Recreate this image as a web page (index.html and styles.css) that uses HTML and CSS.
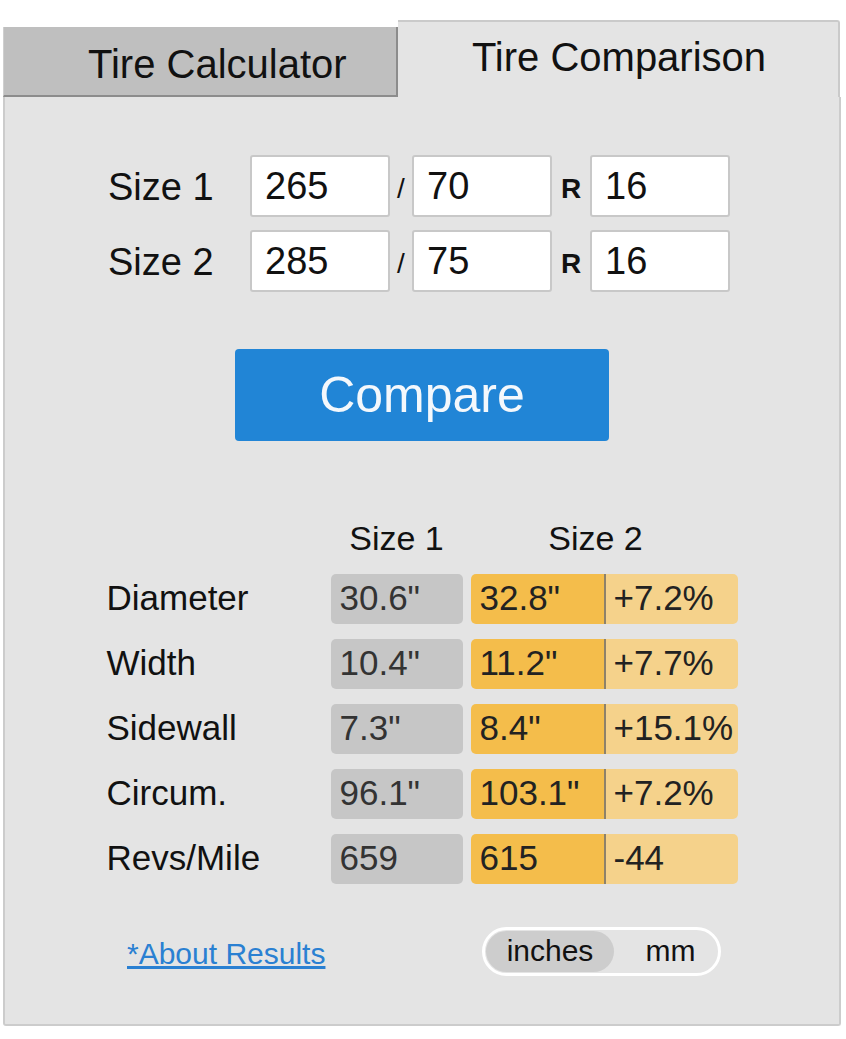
FILE: index.html
```html
<!DOCTYPE html>
<html lang="en">
<head>
    <meta charset="UTF-8">
    <meta name="viewport" content="width=device-width, initial-scale=1.0">
    <title>Tire Comparison</title>
    <link rel="stylesheet" href="styles.css">
</head>
<body>
    <div class="widget">
        <div class="tabs">
            <div class="tab tab-off">Tire Calculator</div>
            <div class="tab tab-on">Tire Comparison</div>
        </div>
        <div class="panel">
            <div class="sizes">
                <div class="size-row">
                    <label class="size-label">Size 1</label>
                    <input class="size-box" type="text" value="265">
                    <span class="sep slash">/</span>
                    <input class="size-box" type="text" value="70">
                    <span class="sep rim">R</span>
                    <input class="size-box" type="text" value="16">
                </div>
                <div class="size-row">
                    <label class="size-label">Size 2</label>
                    <input class="size-box" type="text" value="285">
                    <span class="sep slash">/</span>
                    <input class="size-box" type="text" value="75">
                    <span class="sep rim">R</span>
                    <input class="size-box" type="text" value="16">
                </div>
            </div>

            <button class="compare">Compare</button>

            <div class="results">
                <div class="res-head">
                    <span class="head-label"></span>
                    <span class="head-one">Size 1</span>
                    <span class="head-two">Size 2</span>
                </div>
                <div class="res-row">
                    <span class="res-label">Diameter</span>
                    <span class="cell cell-one">30.6"</span>
                    <span class="cell cell-two">32.8"</span>
                    <span class="cell cell-diff">+7.2%</span>
                </div>
                <div class="res-row">
                    <span class="res-label">Width</span>
                    <span class="cell cell-one">10.4"</span>
                    <span class="cell cell-two">11.2"</span>
                    <span class="cell cell-diff">+7.7%</span>
                </div>
                <div class="res-row">
                    <span class="res-label">Sidewall</span>
                    <span class="cell cell-one">7.3"</span>
                    <span class="cell cell-two">8.4"</span>
                    <span class="cell cell-diff">+15.1%</span>
                </div>
                <div class="res-row">
                    <span class="res-label">Circum.</span>
                    <span class="cell cell-one">96.1"</span>
                    <span class="cell cell-two">103.1"</span>
                    <span class="cell cell-diff">+7.2%</span>
                </div>
                <div class="res-row">
                    <span class="res-label">Revs/Mile</span>
                    <span class="cell cell-one">659</span>
                    <span class="cell cell-two">615</span>
                    <span class="cell cell-diff">-44</span>
                </div>
            </div>

            <div class="footer">
                <a class="about" href="#">*About Results</a>
                <div class="units">
                    <span class="unit unit-on">inches</span>
                    <span class="unit">mm</span>
                </div>
            </div>
        </div>
    </div>
</body>
</html>
```

FILE: styles.css
```css
body {
    font-family: "Liberation Sans", Arial, sans-serif;
    background: #fff;
    color: #111;
    margin: 0;
    padding: 20px 0 0 3px;
}
.widget {
    width: 838px;
}
.tabs {
    display: flex;
    align-items: flex-end;
    height: 77px;
}
.tab {
    display: flex;
    align-items: center;
    font-size: 40px;
    box-sizing: border-box;
}
.tab-off {
    width: 395px;
    height: 70px;
    padding: 6px 0 0 84px;
    background: #bfbfbf;
    border-left: 1px solid #cfcfcf;
    border-right: 2px solid #8c8c8c;
    border-bottom: 2px solid #8c8c8c;
}
.tab-on {
    width: 442px;
    height: 77px;
    justify-content: center;
    padding: 0 0 4px 2px;
    background: #e4e4e4;
    border-top: 2px solid #cacaca;
    border-right: 2px solid #cacaca;
    border-top-right-radius: 3px;
}
.panel {
    width: 838px;
    box-sizing: border-box;
    background: #e4e4e4;
    border: 2px solid #cccccc;
    border-top: none;
    border-radius: 0 0 3px 3px;
    padding: 58px 0 48px;
}
.sizes {
    margin-left: 103px;
}
.size-row {
    display: flex;
    align-items: center;
    height: 62px;
    margin-bottom: 13px;
}
.size-label {
    width: 142px;
    font-size: 38px;
    padding-top: 2px;
}
.size-box {
    width: 140px;
    height: 62px;
    box-sizing: border-box;
    border: 2px solid #c8c8c8;
    border-radius: 3px;
    padding: 0 0 0 13px;
    font-family: inherit;
    font-size: 38px;
    color: #111;
    background: #fff;
}
.sep {
    text-align: center;
    padding-top: 6px;
}
.slash {
    width: 22px;
    font-size: 28px;
}
.rim {
    width: 38px;
    font-size: 28px;
    font-weight: bold;
}
.compare {
    display: block;
    margin: 57px auto 0;
    width: 374px;
    height: 92px;
    padding-bottom: 2px;
    font-family: inherit;
    font-size: 50px;
    color: #f4f8fc;
    background: #2185d6;
    border: none;
    border-radius: 4px;
}
.results {
    width: 631px;
    margin: 77px auto 0;
}
.res-head {
    display: flex;
    height: 40px;
    line-height: 40px;
    font-size: 34px;
    margin-bottom: 16px;
}
.head-label {
    width: 224px;
}
.head-one {
    width: 132px;
    text-align: center;
}
.head-two {
    width: 250px;
    margin-left: 8px;
    text-align: center;
}
.res-row {
    display: flex;
    align-items: center;
    height: 50px;
    margin-bottom: 15px;
}
.res-label {
    width: 224px;
    font-size: 35px;
    padding-bottom: 2px;
}
.cell {
    width: 132px;
    height: 50px;
    box-sizing: border-box;
    padding: 0 0 2px 9px;
    display: flex;
    align-items: center;
    font-size: 35px;
    color: #222;
}
.cell-one {
    background: #c6c6c6;
    border-radius: 5px;
    color: #333;
}
.cell-two {
    width: 135px;
    margin-left: 8px;
    background: #f4bd4b;
    border-right: 2px solid #8e826a;
    border-radius: 5px 0 0 5px;
}
.cell-diff {
    padding-left: 8px;
    background: #f5d28b;
    border-radius: 0 5px 5px 0;
}
.footer {
    width: 594px;
    margin: 43px 0 0 122px;
    display: flex;
    justify-content: space-between;
    align-items: center;
}
.about {
    font-size: 30px;
    color: #2a80d2;
    text-decoration: underline;
    padding-top: 4px;
}
.units {
    display: flex;
    align-items: center;
    width: 239px;
    height: 49px;
    box-sizing: border-box;
    border: 3px solid #fff;
    border-radius: 25px;
    padding: 0 1px;
    background: #e4e4e4;
}
.unit {
    flex: 1;
    text-align: center;
    font-size: 30px;
    padding-bottom: 2px;
    padding-left: 10px;
}
.unit-on {
    flex: none;
    width: 128px;
    height: 41px;
    line-height: 39px;
    padding: 0;
    background: #cdcdcd;
    border-radius: 21px;
}
```
